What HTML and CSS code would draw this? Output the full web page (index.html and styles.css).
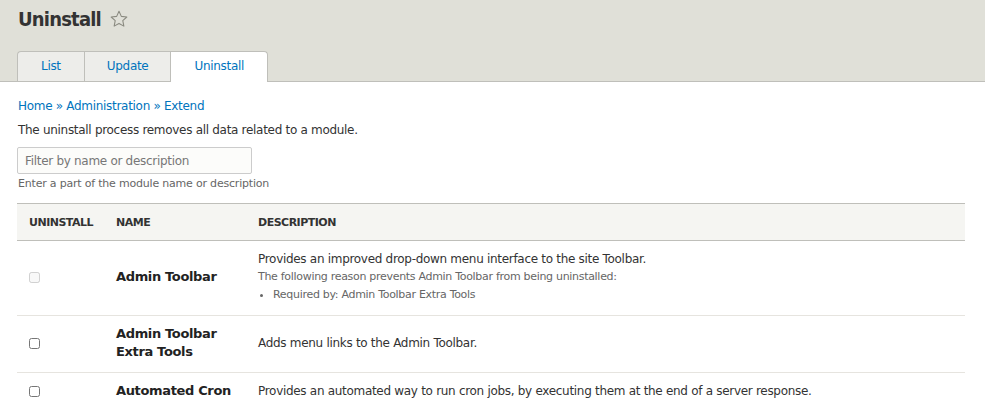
FILE: index.html
```html
<!DOCTYPE html>
<html lang="en">
<head>
  <meta charset="UTF-8" />
  <title>Uninstall</title>
  <link rel="stylesheet" href="styles.css">
</head>
<body>
  <div class="page-header">
    <h1 class="page-title">Uninstall
      <svg class="star" width="18" height="18" viewBox="0 0 20 20"><path d="M10 1.5l2.6 5.6 6.1.7-4.5 4.1 1.2 6-5.4-3-5.4 3 1.2-6-4.5-4.1 6.1-.7z" fill="none" stroke="#8a8a80" stroke-width="1.2" stroke-linejoin="round"/></svg>
    </h1>
    <ul class="tabs">
      <li><a href="#">List</a></li>
      <li><a href="#">Update</a></li>
      <li class="active"><a href="#">Uninstall</a></li>
    </ul>
  </div>

  <div class="content">
    <div class="breadcrumb">
      <a href="#">Home</a> » <a href="#">Administration</a> » <a href="#">Extend</a>
    </div>
    <p class="intro">The uninstall process removes all data related to a module.</p>

    <div class="filter">
      <input type="text" placeholder="Filter by name or description" />
      <div class="help">Enter a part of the module name or description</div>
    </div>

    <table class="modules">
      <thead>
        <tr>
          <th class="col-check">Uninstall</th>
          <th class="col-name">Name</th>
          <th>Description</th>
        </tr>
      </thead>
      <tbody>
        <tr>
          <td class="col-check"><input type="checkbox" disabled /></td>
          <td class="col-name"><label>Admin Toolbar</label></td>
          <td>
            Provides an improved drop-down menu interface to the site Toolbar.
            <div class="reason">The following reason prevents Admin Toolbar from being uninstalled:</div>
            <ul class="reasons"><li>Required by: Admin Toolbar Extra Tools</li></ul>
          </td>
        </tr>
        <tr>
          <td class="col-check"><input type="checkbox" /></td>
          <td class="col-name"><label>Admin Toolbar<br>Extra Tools</label></td>
          <td>Adds menu links to the Admin Toolbar.</td>
        </tr>
        <tr>
          <td class="col-check"><input type="checkbox" /></td>
          <td class="col-name"><label>Automated Cron</label></td>
          <td>Provides an automated way to run cron jobs, by executing them at the end of a server response.</td>
        </tr>
      </tbody>
    </table>
  </div>
</body>
</html>
```

FILE: styles.css
```css
body {
  margin: 0;
  font-family: "DejaVu Sans", sans-serif;
  font-size: 12px;
  letter-spacing: -0.3px;
  color: #333;
  background: #fff;
}
a {
  color: #0074bd;
  text-decoration: none;
}
.page-header {
  background: #e0e0d8;
  border-bottom: 1px solid #bfbfba;
  padding: 0 20px 0 17px;
}
.page-title {
  margin: 0;
  padding: 7px 0 0 1px;
  height: 44px;
  box-sizing: border-box;
  font-family: "DejaVu Sans Condensed", "DejaVu Sans", sans-serif;
  font-size: 20px;
  font-weight: bold;
  letter-spacing: -0.8px;
  color: #333;
  display: flex;
  align-items: flex-start;
  gap: 9px;
}
.star {
  margin-top: 3px;
}
.tabs {
  list-style: none;
  margin: 7px 0 -1px;
  padding: 0;
  display: flex;
}
.tabs li a {
  display: block;
  height: 29px;
  line-height: 29px;
  padding: 0 22px;
  background: #ededea;
  border: 1px solid #bfbfba;
  border-right: none;
  border-bottom: none;
}
.tabs li:first-child a {
  padding: 0 23px;
  border-radius: 4px 0 0 0;
}
.tabs li.active a {
  background: #fff;
  border-right: 1px solid #bfbfba;
  border-radius: 0 4px 0 0;
  height: 30px;
  padding: 0 23px;
}
.content {
  padding: 15px 20px 0 17px;
}
.breadcrumb {
  line-height: 18px;
  color: #0074bd;
  margin-left: 1px;
}
.intro {
  margin: 6px 0 0 1px;
  line-height: 18px;
}
.filter {
  margin-top: 8px;
}
.filter input {
  width: 235px;
  height: 27px;
  box-sizing: border-box;
  border: 1px solid #ccc;
  border-radius: 2px;
  background: #fcfcfa;
  padding: 0 7px;
  font-family: inherit;
  font-size: 12px;
  letter-spacing: -0.3px;
  color: #333;
}
.filter input::placeholder {
  color: #777;
}
.help {
  font-size: 11px;
  letter-spacing: -0.2px;
  color: #666;
  margin-top: 3px;
  margin-left: 1px;
}
.modules {
  width: 100%;
  table-layout: fixed;
  border-collapse: collapse;
  margin-top: 13px;
}
.modules th {
  text-align: left;
  text-transform: uppercase;
  font-size: 11px;
  letter-spacing: -0.5px;
  font-weight: bold;
  color: #333;
  background: #f5f5f2;
  border-top: 1px solid #bfbfba;
  border-bottom: 1px solid #bfbfba;
  height: 36px;
  padding: 0 12px;
}
.modules td {
  border-bottom: 1px solid #e6e4df;
  padding: 9px 12px 11px;
  vertical-align: middle;
  line-height: 18px;
}
.modules .col-check {
  width: 63px;
}
.modules .col-name {
  width: 118px;
}
.modules td.col-name {
  font-weight: bold;
  font-size: 13px;
  letter-spacing: -0.35px;
  color: #222;
}
.reason {
  font-size: 11px;
  color: #666;
}
.reasons {
  margin: 0;
  padding-left: 15px;
  font-size: 11px;
  color: #666;
}
input[type="checkbox"] {
  margin: 0;
  width: 11px;
  height: 11px;
  display: block;
}
```
